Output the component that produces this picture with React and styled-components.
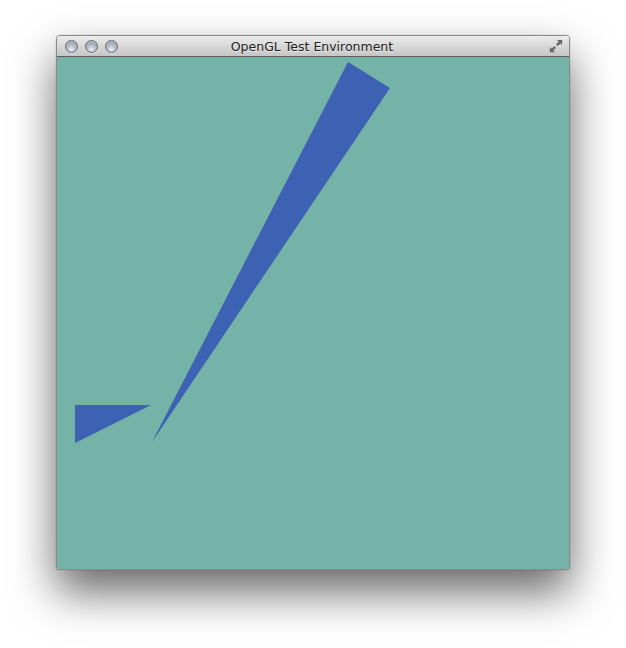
import React from 'react';
import styled, { createGlobalStyle } from 'styled-components';

const GlobalStyle = createGlobalStyle`
  html, body {
    margin: 0;
    padding: 0;
    background: #ffffff;
  }
`;

const Stage = styled.div`
  width: 626px;
  height: 648px;
  display: flex;
  justify-content: center;
  align-items: flex-start;
  padding-top: 35px;
  box-sizing: border-box;
`;

const Window = styled.div`
  width: 514px;
  display: flex;
  flex-direction: column;
  border: 1px solid #8a8a8a;
  border-radius: 4px 4px 2px 2px;
  overflow: hidden;
  box-sizing: border-box;
  box-shadow: 0 22px 45px rgba(0, 0, 0, 0.6), 0 0 1px rgba(0, 0, 0, 0.5);
`;

const TitleBar = styled.div`
  height: 20px;
  display: flex;
  align-items: center;
  padding: 0 6px 0 8px;
  background: linear-gradient(#ececec, #d4d4d4 60%, #c6c6c6);
  border-bottom: 1px solid #5c5c5c;
`;

const Side = styled.div`
  width: 54px;
  display: flex;
  align-items: center;
  justify-content: ${(p) => (p.end ? 'flex-end' : 'flex-start')};
  gap: 7px;
`;

const Light = styled.span`
  width: 13px;
  height: 13px;
  border-radius: 50%;
  box-sizing: border-box;
  border: 1px solid #5f6670;
  background: radial-gradient(circle at 50% 75%, #eef1f5 0%, #b0b8c3 45%, #7f8893 100%);
  box-shadow: inset 0 1px 1px rgba(255, 255, 255, 0.5), 0 1px 0 rgba(255, 255, 255, 0.5);
`;

const Title = styled.div`
  flex: 1;
  text-align: center;
  padding-right: 4px;
  font-family: "DejaVu Sans", "Liberation Sans", sans-serif;
  font-size: 12.5px;
  color: #222;
  text-shadow: 0 1px 0 rgba(255, 255, 255, 0.6);
`;

const Canvas = styled.svg`
  display: block;
  width: 512px;
  height: 512px;
  background: #75b3a9;
`;

const ResizeIcon = () => (
  <svg width="14" height="14" viewBox="0 0 16 16">
    <g fill="#686868">
      <polygon points="9,1 15,1 15,7 13,5 10,8 8,6 11,3" />
      <polygon points="7,15 1,15 1,9 3,11 6,8 8,10 5,13" />
    </g>
  </svg>
);

export default function App() {
  return (
    <>
      <GlobalStyle />
      <Stage>
        <Window>
          <TitleBar>
            <Side>
              <Light />
              <Light />
              <Light />
            </Side>
            <Title>OpenGL Test Environment</Title>
            <Side end>
              <ResizeIcon />
            </Side>
          </TitleBar>
          <Canvas viewBox="0 0 512 512">
            <polygon points="291,5 333,31 95,385" fill="#3d61b3" />
            <polygon points="18,348 94,348 18,386" fill="#3d61b3" />
          </Canvas>
        </Window>
      </Stage>
    </>
  );
}
